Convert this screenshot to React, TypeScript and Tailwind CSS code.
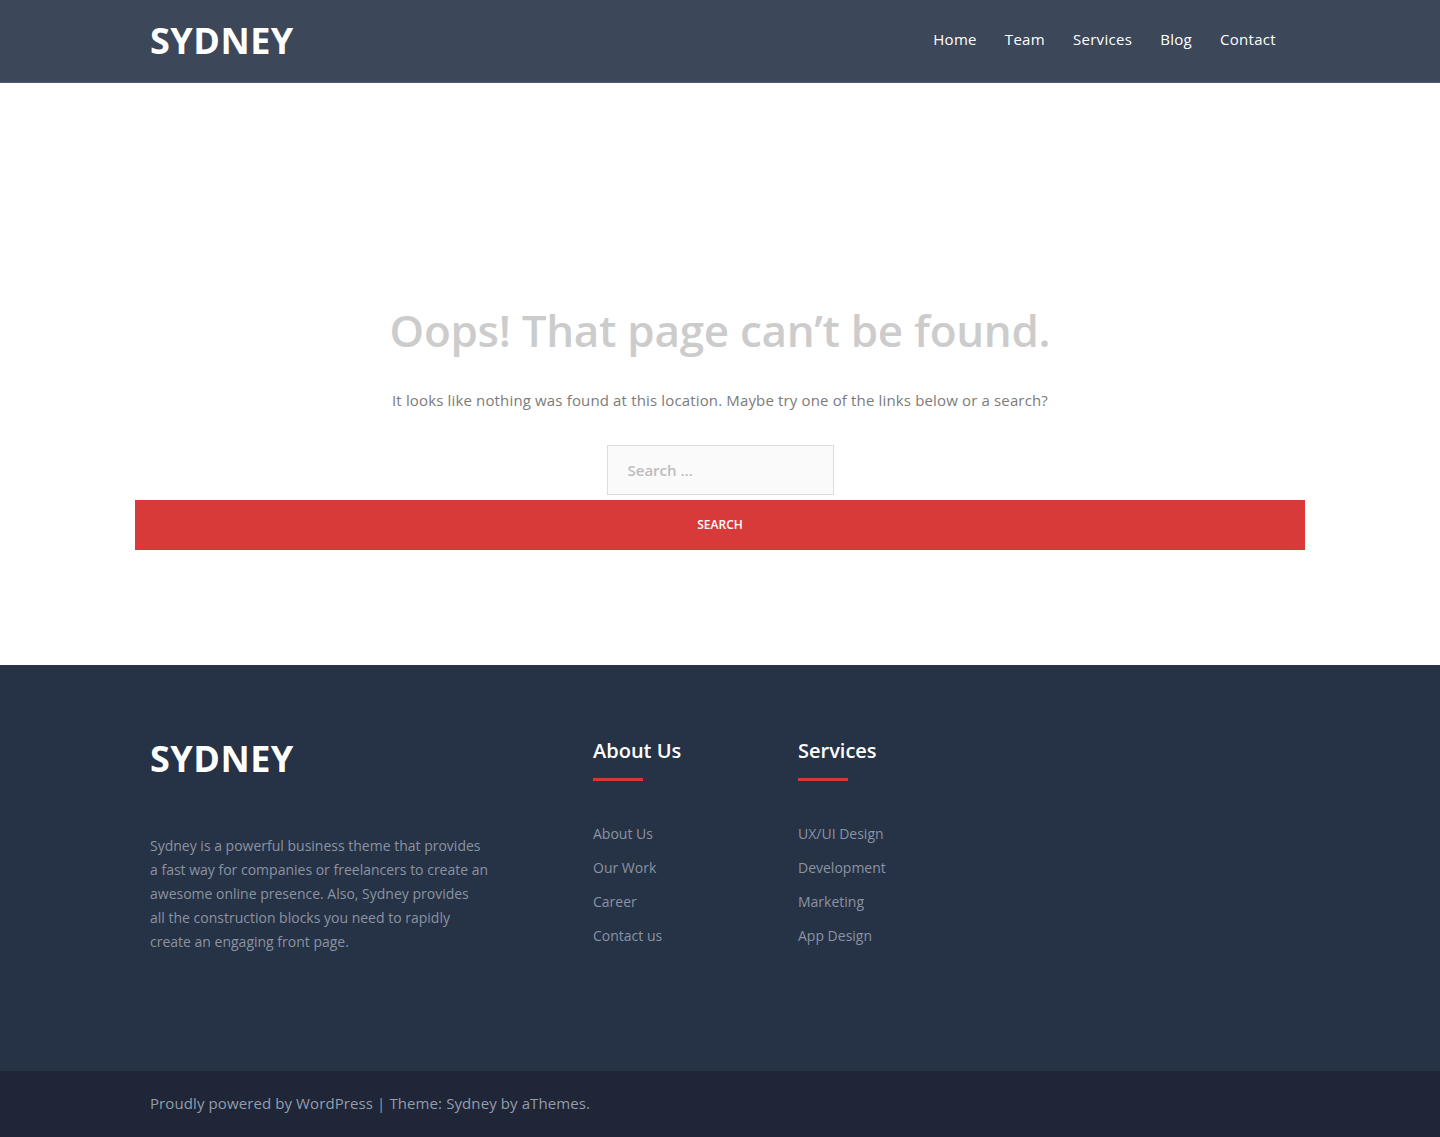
import { Fragment } from 'react';

const font = { fontFamily: '"Open Sans", "Liberation Sans", sans-serif' };

const navLinks = ['Home', 'Team', 'Services', 'Blog', 'Contact'];
const aboutLinks = ['About Us', 'Our Work', 'Career', 'Contact us'];
const serviceLinks = ['UX/UI Design', 'Development', 'Marketing', 'App Design'];

const blurb = [
  'Sydney is a powerful business theme that provides',
  'a fast way for companies or freelancers to create an',
  'awesome online presence. Also, Sydney provides',
  'all the construction blocks you need to rapidly',
  'create an engaging front page.',
];

function FooterColumn({ title, links }: { title: string; links: string[] }) {
  return (
    <div className="w-[205px]">
      <h3 className="text-[20px] font-semibold text-white leading-none">{title}</h3>
      <div className="w-[50px] h-[3px] bg-[#d63838] mt-[17px]" />
      <ul className="mt-[42px] space-y-[13px]">
        {links.map((l) => (
          <li key={l} className="text-[14px] text-[#8b93a1] leading-[21px]">{l}</li>
        ))}
      </ul>
    </div>
  );
}

export default function App() {
  return (
    <div style={font} className="min-h-[1137px] bg-white flex flex-col">
      {/* Header */}
      <header className="h-[83px] bg-[#3c4759] border-b border-[#535d6d]">
        <div className="w-[1140px] mx-auto h-full flex items-center justify-between">
          <span className="text-[36px] font-bold text-white tracking-[0.5px] leading-none -mt-[1px]">SYDNEY</span>
          <nav className="flex items-center gap-[28px] pr-[14px] -mt-[3px]">
            {navLinks.map((l) => (
              <a key={l} className="text-[15px] text-white tracking-[0.3px]">{l}</a>
            ))}
          </nav>
        </div>
      </header>

      {/* Main */}
      <main className="flex-1 h-[582px]">
        <div className="w-[1170px] mx-auto pt-[219px] flex flex-col items-center">
          <h1 className="text-[44px] font-semibold text-[#cccccc] leading-[56px] tracking-[-0.3px]">
            Oops! That page can’t be found.
          </h1>
          <p className="mt-[31px] text-[15px] text-[#7b7b7b] leading-[22px] tracking-[0.15px]">
            It looks like nothing was found at this location. Maybe try one of the links below or a search?
          </p>
          <div className="mt-[34px] w-[227px] h-[50px] bg-[#fafafa] border border-[#dddddd] flex items-center px-[20px]">
            <span className="text-[15px] font-semibold text-[#bdbdbd]">Search …</span>
          </div>
          <button className="mt-[5px] w-full h-[50px] bg-[#d83a3a] text-white text-[12px] font-semibold uppercase">
            Search
          </button>
        </div>
      </main>

      {/* Footer widgets */}
      <footer className="h-[406px] bg-[#263246]">
        <div className="w-[1140px] mx-auto pt-[76px] flex">
          <div className="w-[443px]">
            <div className="text-[36px] font-bold text-white tracking-[0.5px] leading-none">SYDNEY</div>
            <p className="mt-[57px] text-[14px] text-[#8b93a1] leading-[24px]">
              {blurb.map((line, i) => (
                <Fragment key={i}>
                  {line}
                  {i < blurb.length - 1 && <br />}
                </Fragment>
              ))}
            </p>
          </div>
          <FooterColumn title="About Us" links={aboutLinks} />
          <FooterColumn title="Services" links={serviceLinks} />
        </div>
      </footer>

      {/* Site info */}
      <div className="h-[66px] bg-[#1e2637]">
        <div className="w-[1140px] mx-auto h-full flex items-center text-[15px] text-[#959cab] tracking-[0.1px] -mt-[1px]">
          Proudly powered by WordPress | Theme: Sydney by aThemes.
        </div>
      </div>
    </div>
  );
}
